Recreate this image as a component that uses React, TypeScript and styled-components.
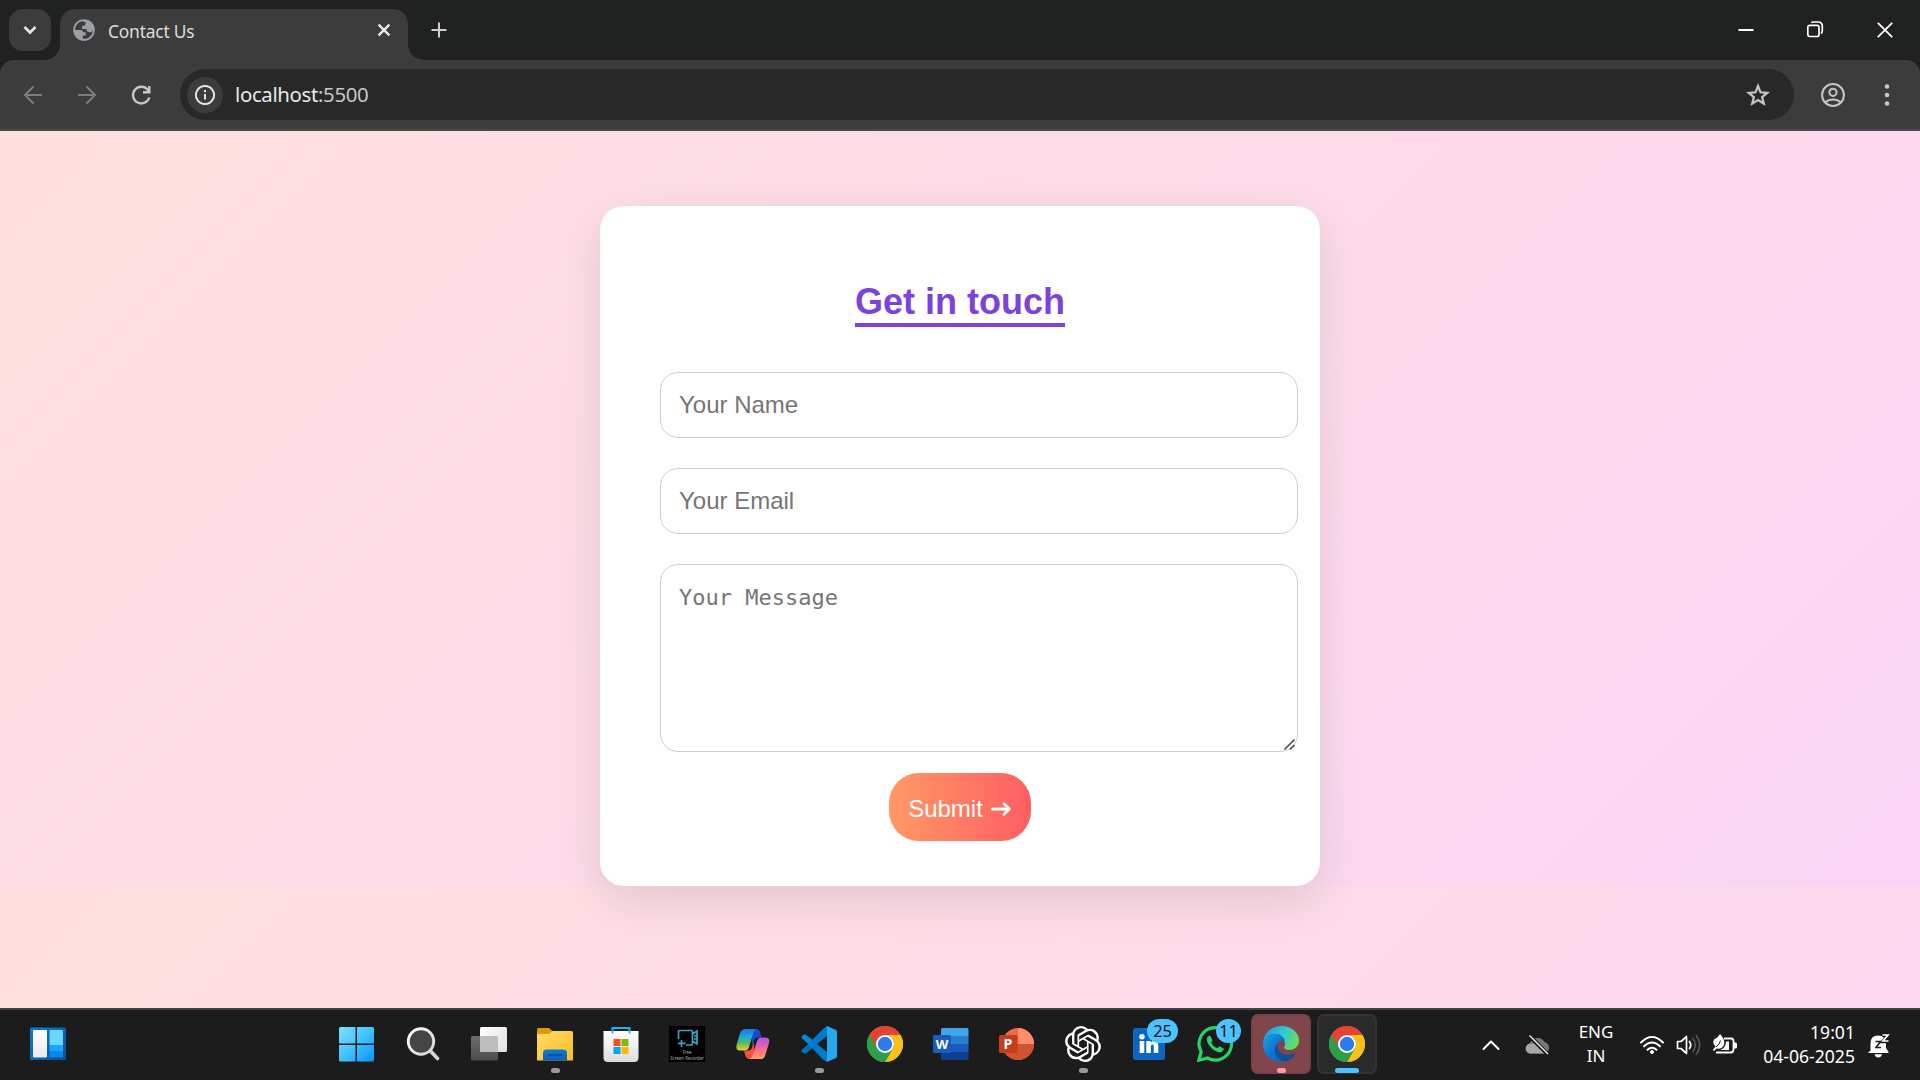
import React from 'react';
import styled, { createGlobalStyle } from 'styled-components';

const ui = `"Noto Sans", "Open Sans", sans-serif`;

const Global = createGlobalStyle`
  * { box-sizing: border-box; }
  body { margin: 0; overflow: hidden; background: #1c1c1c; }
  svg { display: block; flex: none; }
`;

const Screen = styled.div`
  width: 1920px;
  height: 1080px;
  display: flex;
  flex-direction: column;
  overflow: hidden;
`;

/* ---------- Browser ---------- */
const TabStrip = styled.header`
  height: 60px;
  background: #202221;
  display: flex;
  align-items: flex-start;
`;
const TabSearch = styled.button`
  width: 42px;
  height: 42px;
  margin: 9px 9px 0;
  padding: 0;
  border: 0;
  border-radius: 14px;
  background: #3c3c3c;
  display: grid;
  place-items: center;
`;
const Tab = styled.div`
  position: relative;
  width: 348px;
  height: 51px;
  margin-top: 9px;
  padding: 0 17px 0 13px;
  border-radius: 15px 15px 0 0;
  background: #3c3c3c;
  display: flex;
  align-items: flex-start;
  &::before, &::after {
    content: '';
    position: absolute;
    bottom: 0;
    width: 15px;
    height: 15px;
  }
  &::before { left: -15px; background: radial-gradient(circle at 0 0, transparent 14.5px, #3c3c3c 15px); }
  &::after { right: -15px; background: radial-gradient(circle at 100% 0, transparent 14.5px, #3c3c3c 15px); }
`;
const Favicon = styled.div`
  margin: 10px 13px 0 0;
`;
const TabTitle = styled.span`
  flex: 1;
  margin-top: 9px;
  font: 17.4px/26px ${ui};
  letter-spacing: -0.2px;
  color: #dedede;
`;
const TabClose = styled.div`
  margin-top: 14px;
`;
const NewTab = styled.div`
  margin: 22px 0 0 33px;
  transform: translateX(-10px);
`;
const WindowButtons = styled.div`
  margin-left: auto;
  height: 59px;
  padding-right: 27px;
  display: flex;
  align-items: center;
  gap: 53px;
`;
const ToolbarBack = styled.div`
  height: 71px;
  background: #202221;
`;
const Toolbar = styled.nav`
  height: 71px;
  background: #3c3c3c;
  border-radius: 14px 14px 0 0;
  border-bottom: 2px solid #4a4a4a;
  padding: 9px 28px 9px 21px;
  display: flex;
  align-items: center;
`;
const NavIcons = styled.div`
  display: flex;
  align-items: center;
  gap: 30px;
  width: 159px;
`;
const AddressBar = styled.div`
  width: 1614px;
  height: 51px;
  border-radius: 26px;
  background: #282828;
  padding: 0 24px 0 7px;
  display: flex;
  align-items: center;
`;
const SiteInfo = styled.div`
  width: 36px;
  height: 36px;
  border-radius: 50%;
  background: #3c3c3c;
  display: grid;
  place-items: center;
`;
const Url = styled.span`
  flex: 1;
  margin: 0 0 2px 12px;
  font: 20.4px/30px ${ui};
  letter-spacing: -0.35px;
  color: #e8e8e8;
  span { color: #c7c7c7; }
`;
const ToolIcons = styled.div`
  margin-left: auto;
  display: flex;
  align-items: center;
  gap: 37px;
`;

/* ---------- Contact page ---------- */
const Page = styled.main`
  height: 877px;
  padding-top: 75px;
  background-image: linear-gradient(135deg, #ffe0de, #fddce5 32%, #fcd9ec 70%, #f9d4f8);
  background-size: 100% 755px;
`;
const Card = styled.form`
  width: 720px;
  height: 680px;
  margin: 0 auto;
  padding: 77px 22px 0 60px;
  border-radius: 24px;
  background: #fff;
  box-shadow: 0 15px 45px rgba(0, 0, 0, 0.1);
  font-family: "Liberation Sans", Arial, sans-serif;
`;
const Heading = styled.h2`
  width: fit-content;
  margin: 0 0 45px 195px;
  padding: 0 0 2px;
  border-bottom: 4px solid #7b43dc;
  font-size: 36px;
  line-height: 38px;
  white-space: nowrap;
  color: #7b43dc;
`;
const Input = styled.input`
  display: block;
  width: 638px;
  height: 66px;
  margin: 0 0 30px;
  padding: 0 18px;
  border: 1px solid #ccc;
  border-radius: 18px;
  background: #fff;
  font: 24px "Liberation Sans", Arial, sans-serif;
  &::placeholder { color: #757575; }
`;
const MessageField = styled.div`
  position: relative;
  width: 638px;
  height: 188px;
`;
const Message = styled.textarea`
  display: block;
  width: 100%;
  height: 100%;
  padding: 19px 18px;
  border: 1px solid #ccc;
  border-radius: 18px;
  background: #fff;
  resize: none;
  font: 22px/28px "DejaVu Sans Mono", monospace;
  &::placeholder { color: #757575; }
`;
const Grip = styled.div`
  position: absolute;
  right: 2px;
  bottom: 1px;
`;
const Submit = styled.button`
  width: 142px;
  height: 68px;
  margin: 21px 0 0 229px;
  padding: 3px 0 0;
  border: 0;
  border-radius: 30px;
  background: linear-gradient(to right, #ff9966, #ff5e62);
  color: #fff;
  font: 24px "Liberation Sans", Arial, sans-serif;
  display: flex;
  align-items: center;
  justify-content: center;
  gap: 8px;
`;

/* ---------- Taskbar ---------- */
const Taskbar = styled.footer`
  height: 72px;
  border-top: 2px solid #424242;
  background: #1c1c1c;
  display: flex;
  align-items: flex-start;
`;
const Widgets = styled.div`
  width: 327px;
  padding: 16px 0 0 30px;
`;
const Apps = styled.div`
  display: flex;
  gap: 6px;
  padding-top: 4px;
`;
const AppTile = styled.div<{ $tone?: 'alert' | 'active' }>`
  position: relative;
  width: 60px;
  height: 60px;
  border-radius: 7px;
  border: 2px solid ${p => (p.$tone === 'active' ? '#343434' : p.$tone === 'alert' ? '#74434a' : 'transparent')};
  background: ${p => (p.$tone === 'active' ? '#2a2a2a' : p.$tone === 'alert' ? '#81454c' : 'transparent')};
  display: grid;
  place-items: center;
`;
const Indicator = styled.i<{ $w?: number; $c?: string }>`
  position: absolute;
  bottom: -1px;
  left: calc(50% - ${p => (p.$w ?? 9) / 2}px);
  width: ${p => p.$w ?? 9}px;
  height: 5px;
  border-radius: 3px;
  background: ${p => p.$c ?? '#9a9a9a'};
`;
const Badge = styled.span<{ $w: number; $x: number }>`
  position: absolute;
  top: 3px;
  left: ${p => p.$x}px;
  width: ${p => p.$w}px;
  height: 24px;
  border-radius: 12px;
  background: #4cc2ff;
  color: #111;
  font: 16.5px/24px ${ui};
  letter-spacing: -0.3px;
  text-align: center;
`;
const Tray = styled.div`
  margin-left: auto;
  height: 69px;
  display: flex;
  align-items: center;
  padding-right: 30px;
  color: #fff;
`;
const TrayItem = styled.div<{ $gap: number }>`
  margin-right: ${p => p.$gap}px;
`;
const TrayText = styled.div<{ $align: 'center' | 'flex-end'; $gap: number; $w: number; $size: number }>`
  width: ${p => p.$w}px;
  margin: 0 ${p => p.$gap}px 1px 0;
  font: ${p => p.$size}px/24px ${ui};
  white-space: nowrap;
  display: flex;
  flex-direction: column;
  align-items: ${p => p.$align};
`;
const RecorderCaption = styled.div`
  position: absolute;
  left: 0;
  right: 0;
  top: 33px;
  text-align: center;
  font: 4.4px/6px ${ui};
  color: #aaa;
`;

const Line = ({ d, w = 18, h = w, vb = `0 0 ${w} ${h}`, s = 2, c = '#c7c7c7', cap = 'butt' }: {
  d: string; w?: number; h?: number; vb?: string; s?: number; c?: string; cap?: 'butt' | 'round';
}) => (
  <svg width={w} height={h} viewBox={vb} fill="none" stroke={c} strokeWidth={s} strokeLinecap={cap} strokeLinejoin={cap === 'round' ? 'round' : 'miter'}>
    <path d={d} />
  </svg>
);

const Chrome = () => (
  <svg width="36" height="36" viewBox="0 0 36 36">
    <circle cx="18" cy="18" r="18" fill="#2f9e4a" />
    <path d="M2.4 9A18 18 0 0 1 33.6 9H18A9 9 0 0 0 10.2 22.5Z" fill="#e94235" />
    <path d="M33.6 9A18 18 0 0 1 18 36L25.8 22.5A9 9 0 0 0 18 9Z" fill="#fcc016" />
    <path d="M2.4 9A18 18 0 0 0 18 36L25.8 22.5A9 9 0 0 1 10.2 22.5Z" fill="#2f9e4a" />
    <circle cx="18" cy="18" r="9" fill="#fff" />
    <circle cx="18" cy="18" r="7.2" fill="#2f7bed" />
  </svg>
);

const Knot = () => (
  <svg width="36" height="36" viewBox="0 0 24 24" fill="#fff">
    <path d="M22.28 9.82a5.98 5.98 0 0 0-.52-4.91 6.05 6.05 0 0 0-6.51-2.9A6.07 6.07 0 0 0 4.98 4.18a5.98 5.98 0 0 0-4 2.9 6.05 6.05 0 0 0 .74 7.1 5.98 5.98 0 0 0 .51 4.91 6.05 6.05 0 0 0 6.52 2.9A5.98 5.98 0 0 0 13.26 24a6.06 6.06 0 0 0 5.77-4.21 5.99 5.99 0 0 0 4-2.9 6.06 6.06 0 0 0-.75-7.07zm-9.02 12.61a4.48 4.48 0 0 1-2.88-1.04l.14-.08 4.78-2.76a.8.8 0 0 0 .39-.68v-6.74l2.02 1.17a.07.07 0 0 1 .04.05v5.58a4.5 4.5 0 0 1-4.49 4.5zM3.6 18.3a4.47 4.47 0 0 1-.54-3.01l.14.09 4.78 2.76a.77.77 0 0 0 .78 0l5.85-3.37v2.33a.08.08 0 0 1-.03.06L9.74 19.95a4.5 4.5 0 0 1-6.14-1.65zM2.34 7.9a4.49 4.49 0 0 1 2.37-1.98V11.6a.77.77 0 0 0 .39.68l5.81 3.35-2.02 1.17a.08.08 0 0 1-.07 0L4 14.01A4.5 4.5 0 0 1 2.34 7.87zm16.6 3.86L13.1 8.36 15.12 7.2a.08.08 0 0 1 .07 0l4.83 2.79a4.49 4.49 0 0 1-.68 8.1v-5.68a.79.79 0 0 0-.4-.65zm2-3.03-.14-.08-4.77-2.78a.78.78 0 0 0-.79 0L9.41 9.23V6.9a.07.07 0 0 1 .03-.06l4.83-2.79a4.5 4.5 0 0 1 6.68 4.66zM8.31 12.86l-2.02-1.16a.08.08 0 0 1-.04-.06V6.07a4.5 4.5 0 0 1 7.38-3.45l-.14.08-4.78 2.76a.8.8 0 0 0-.4.68zm1.1-2.36 2.6-1.5 2.61 1.5v3l-2.6 1.5-2.61-1.5Z" />
  </svg>
);

const Grad = ({ id, stops, x2 = 1, y2 = 1 }: { id: string; stops: string[]; x2?: number; y2?: number }) => (
  <linearGradient id={id} x1="0" y1="0" x2={x2} y2={y2}>
    {stops.map((c, i) => <stop key={c + i} offset={i / (stops.length - 1)} stopColor={c} />)}
  </linearGradient>
);

const BrowserChrome = () => (
  <>
    <TabStrip>
      <TabSearch><Line w={14} h={10} s={2.7} c="#e3e3e3" d="M1.5 2 7 7.5 12.5 2" /></TabSearch>
      <Tab>
        <Favicon>
          <svg width="22" height="22" viewBox="0 0 22 22">
            <circle cx="11" cy="11" r="10.8" fill="#9aa0a6" />
            <path d="M9.1 2.3C5 3 2.2 6.5 2.2 10.9h5.6c1.500 0 2.300 1 2.300 2.400h2.600v3.200h-3v3.100c5.300.900 9.900-3.200 10.100-8.200-.800 1.300-1.700 1.800-3.400 1.800-2 0-3-1.300-3-3.100H9.100V6.700h2.700c0-1.300.500-2.100 1.400-2.700-1.200-.600-2.400-1.800-4.100-1.700Z" fill="#3c3c3c" />
          </svg>
        </Favicon>
        <TabTitle>Contact Us</TabTitle>
        <TabClose><Line w={14} s={2.5} c="#e8e8e8" d="M1.6 1.6 12.4 12.4M12.4 1.6 1.6 12.4" /></TabClose>
      </Tab>
      <NewTab><Line w={16} s={2} c="#d0d0d0" d="M8 .5V15.5M.5 8H15.5" /></NewTab>
      <WindowButtons>
        <Line w={16} s={2} c="#fff" d="M.5 8H15.5" />
        <Line w={17} s={1.7} c="#fff" d="M2.8 4.3H10a2 2 0 0 1 2 2V13.500a2 2 0 0 1-2 2H2.800a2 2 0 0 1-2-2V6.300a2 2 0 0 1 2-2ZM4.300 1.600Q5 1 6.500 1H11.500A3.800 3.800 0 0 1 15.300 4.800V9.500Q15.300 11.500 14 12.500" />
        <Line w={16} s={1.8} c="#fff" d="M.8.800 15.200 15.200M15.200.800.800 15.200" />
      </WindowButtons>
    </TabStrip>
    <ToolbarBack>
      <Toolbar>
        <NavIcons>
          <Line w={24} c="#7d7d7d" d="M21 12H4.500M12.500 3.500 4 12 12.500 20.500" />
          <Line w={24} c="#7d7d7d" d="M3 12H19.500M11.500 3.500 20 12 11.500 20.500" />
          <Line w={24} s={2.4} d="M20.300 14.500A8.300 8.300 0 1 1 18.500 6.500L20.500 9M20.300 3V9.300H14" />
        </NavIcons>
        <AddressBar>
          <SiteInfo><Line w={22} s={2} c="#e3e3e3" d="M11 2A9 9 0 1 1 10.990 2ZM11 10V15.500M11 6V8.200" /></SiteInfo>
          <Url>localhost<span>:5500</span></Url>
          <Line w={24} s={2.2} d="M12 3 14.500 9.300 21.300 9.800 16.100 14.100 17.800 20.700 12 17.100 6.200 20.700 7.900 14.100 2.700 9.800 9.500 9.300Z" />
        </AddressBar>
        <ToolIcons>
          <svg width="24" height="24" viewBox="0 0 24 24" fill="none" stroke="#c7c7c7" strokeWidth="2">
            <circle cx="12" cy="12" r="10.900" /><circle cx="12" cy="9.300" r="3.600" /><path d="M4.500 19.300C8.500 15.700 15.500 15.700 19.500 19.300" />
          </svg>
          <svg width="10" height="24" viewBox="0 0 10 24" fill="#c7c7c7">
            <circle cx="5" cy="3.500" r="2.300" /><circle cx="5" cy="12" r="2.300" /><circle cx="5" cy="20.500" r="2.300" />
          </svg>
        </ToolIcons>
      </Toolbar>
    </ToolbarBack>
  </>
);

const TaskbarApps = () => (
  <Apps>
    <AppTile>
      <svg width="36" height="36" viewBox="1 0 36 36">
        <defs><Grad id="win" stops={['#84dcff', '#3fc4ff', '#0a94ff']} /></defs>
        <path d="M2.500 1H17.500V17.500H1V2.500Q1 1 2.500 1ZM19 1H34.500Q36 1 36 2.500V17.500H19ZM1 19H17.500V35.500H2.500Q1 35.500 1 34ZM19 19H36V34Q36 35.500 34.500 35.500H19Z" fill="url(#win)" />
      </svg>
    </AppTile>
    <AppTile>
      <svg width="36" height="36" viewBox="0 0 36 36">
        <defs><Grad id="sr" stops={['#ffffff', '#cfd2da']} /></defs>
        <circle cx="16" cy="15.500" r="12.700" fill="#454545" stroke="url(#sr)" strokeWidth="2.900" />
        <path d="M25.500 25 32.500 32.500" stroke="#d3d6de" strokeWidth="3.600" strokeLinecap="round" />
      </svg>
    </AppTile>
    <AppTile>
      <svg width="38" height="36" viewBox="0 0 38 36">
        <defs><Grad id="tv" stops={['#ffffff', '#dedede']} /><Grad id="tg" x2={0} stops={['#6d6d6d', '#4d4d4d']} /></defs>
        <rect x="1" y="10" width="27" height="24.500" rx="1.500" fill="url(#tg)" />
        <rect x="10" y="1" width="27" height="25" rx="1.500" fill="url(#tv)" />
        <path d="M10 10H28V26H11.500Q10 26 10 24.500Z" fill="#bdbdbd" />
      </svg>
    </AppTile>
    <AppTile>
      <svg width="36" height="36" viewBox="0 0 36 36">
        <defs><Grad id="fo" stops={['#ffdc6c', '#fcbd1d']} /><Grad id="fb" x2={0} stops={['#0d7bd3', '#0b60b5']} /></defs>
        <path d="M0 3.500Q0 2 1.500 2H12L16 5.500V10H0Z" fill="#dd9c07" />
        <path d="M0 8H12L15.500 5H34.500Q36 5 36 6.500V34.500H0Z" fill="url(#fo)" />
        <path d="M6 34.500V27Q6 23.500 9.500 23.500H26.500Q30 23.500 30 27V34.500Z" fill="url(#fb)" />
        <path d="M11 29H25" stroke="#084d96" strokeWidth="1.500" />
      </svg>
      <Indicator />
    </AppTile>
    <AppTile>
      <svg width="36" height="36" viewBox="0 0 36 36">
        <defs><Grad id="st" x2={0} stops={['#ffffff', '#dddddd']} /></defs>
        <path d="M.500 5H35.500V31.500Q35.500 36 31 36H5Q.500 36 .500 31.500Z" fill="url(#st)" />
        <path d="M9.500 7.500V2H26.500V7.500" fill="none" stroke="#1fb4ee" strokeWidth="2" />
        <path d="M10.500 13H17.500V20H10.500Z" fill="#f04f23" /><path d="M18.500 13H25.500V20H18.500Z" fill="#80ba01" />
        <path d="M10.500 21H17.500V28H10.500Z" fill="#02a4ef" /><path d="M18.500 21H25.500V28H18.500Z" fill="#ffb902" />
      </svg>
    </AppTile>
    <AppTile>
      <svg width="36" height="36" viewBox="0 0 36 36">
        <path d="M0 0H36V36H0Z" fill="#000" />
        <path d="M9.500 13V5.500Q9.500 4.500 10.500 4.500H22.500Q23.500 4.500 23.500 5.500V18Q23.500 19 22.500 19H17M23.500 8 28 5V18L23.500 15M25 10H28M25 13H28M12.500 14V21M9 17.300H16.500" fill="none" stroke="#35a5c4" strokeWidth="1.700" />
      </svg>
      <RecorderCaption>Free<br />Screen Recorder</RecorderCaption>
    </AppTile>
    <AppTile>
      <svg width="36" height="36" viewBox="0 0 36 36">
        <defs>
          <Grad id="cl" x2={0} stops={['#1e75dc', '#16a6e8', '#58bd5c', '#f3cf20']} />
          <Grad id="cr" x2={0} stops={['#a855ee', '#dc5cbb', '#ff7580', '#ffa45c']} />
        </defs>
        <path d="M17 3H21.500Q24 3 25 6L26.500 11.500H22.500Q20 11.500 18.500 16L17 20Z" fill="#1b49c9" />
        <path d="M19 33H14.500Q11.500 33 10.500 30L9 24.500H13.500Q16.500 24.500 17.500 20L19 16Z" fill="#f4513c" />
        <path d="M10 3H22Q19.500 3 18 8L14 21Q13 24.500 9.500 24.500H5Q.500 24.500 1.500 19L5 7.500Q6.500 3 10 3Z" fill="url(#cl)" />
        <path d="M26 33H14Q16.500 33 18 28L22 15Q23 11.500 26.500 11.500H30Q35.500 11.500 34 17L30.500 28.500Q29.500 33 26 33Z" fill="url(#cr)" />
      </svg>
    </AppTile>
    <AppTile>
      <svg width="36" height="36" viewBox="0 0 36 36">
        <path d="M26 1 1.200 23.500Q-.200 25 1.200 26.200L3.200 27.500Q4.200 28 5 27.300L26 11Z" fill="#0070b8" />
        <path d="M26 35 1.200 12.500Q-.200 11 1.200 9.800L3.200 8.500Q4.200 8 5 8.700L26 25Z" fill="#0089d6" />
        <path d="M26 0 35 4Q36 4.500 36 6V30Q36 31.500 35 32L26 36Z" fill="#27a9f2" />
        <path d="M26 0V11L17 18 26 25V36L22 33.500 10 21 8 18 10 15 22 3Z" fill="#007acc" />
        <path d="M26 10V26L16 18Z" fill="#1c1c1c" />
      </svg>
      <Indicator />
    </AppTile>
    <AppTile><Chrome /></AppTile>
    <AppTile>
      <svg width="36" height="36" viewBox="0 0 36 36">
        <path d="M8 3.500Q8 2 9.500 2H34Q35.500 2 35.500 3.500V10H8Z" fill="#41a5ee" />
        <path d="M8 10H35.500V18H8Z" fill="#2b7cd3" /><path d="M8 18H35.500V26H8Z" fill="#185abd" />
        <path d="M8 26H35.500V32.500Q35.500 34 34 34H9.500Q8 34 8 32.500Z" fill="#103f91" />
        <rect y="9" width="18" height="18" rx="1.500" fill="#1a5cbe" />
        <text x="9" y="22.500" textAnchor="middle" fill="#fff" fontFamily="Open Sans" fontWeight="700" fontSize="13">W</text>
      </svg>
    </AppTile>
    <AppTile>
      <svg width="36" height="36" viewBox="0 0 36 36">
        <circle cx="19" cy="18" r="16" fill="#ed6c47" />
        <path d="M19 2A16 16 0 0 1 35 18H19Z" fill="#ff8f6b" /><path d="M3 18H35A16 16 0 0 1 3 18Z" fill="#d35230" />
        <rect y="9" width="18.500" height="18" rx="1.500" fill="#c43e1c" />
        <text x="9" y="23" textAnchor="middle" fill="#fff" fontFamily="Open Sans" fontWeight="700" fontSize="14">P</text>
      </svg>
    </AppTile>
    <AppTile><Knot /><Indicator /></AppTile>
    <AppTile>
      <svg width="36" height="36" viewBox="0 0 36 36">
        <rect x="2" y="2" width="32" height="32" rx="2.500" fill="#0a66c2" />
        <circle cx="11" cy="10.800" r="2.700" fill="#fff" />
        <path d="M8.700 15H13.300V27H8.700ZM15.300 15H19.700V16.700C20.700 15.300 22 14.700 23.600 14.700 26.500 14.700 27.300 17 27.300 20V27H22.800V20.800C22.800 19.500 22.500 18.500 21.400 18.500 20.200 18.500 19.800 19.500 19.800 20.800V27H15.300Z" fill="#fff" />
      </svg>
      <Badge $w={31} $x={26}>25</Badge>
    </AppTile>
    <AppTile>
      <svg width="36" height="36" viewBox="0 0 36 36">
        <path d="M18.500 1.600A16.200 16.200 0 1 1 10.500 32L1.800 34.200 4.200 25.800A16.200 16.200 0 0 1 18.500 1.600Z" fill="none" stroke="#25d366" strokeWidth="3.200" />
        <path d="M12.800 9.500C10 10.500 9.300 12.500 10 15 11.500 20 17 25.500 22 26.200 24.500 26.500 26.500 25 26.800 22.500L22.300 20.200C21.500 21 21.300 22.200 20.200 22.100 17.700 21.500 15 18.800 14.300 16.800 14.200 15.800 15.500 15.300 15.500 14.300Z" fill="#25d366" />
      </svg>
      <Badge $w={25} $x={29}>11</Badge>
    </AppTile>
    <AppTile $tone="alert">
      <svg width="36" height="36" viewBox="0 0 36 36">
        <defs>
          <linearGradient id="et" x1="0" y1="0.300" x2="1" y2="0.600"><stop stopColor="#259bdd" /><stop offset=".55" stopColor="#35c8cf" /><stop offset="1" stopColor="#6be14b" /></linearGradient>
          <Grad id="eb" stops={['#22a5e4', '#0877d2', '#0868be']} />
        </defs>
        <path d="M0 17C1 6 8.500 0 18.500 0 28.500 0 36 6.500 36 14.500 36 20.500 31.500 24 26.500 24 23 24 20.800 22.700 21 21.500 23.500 18 22 12 13 11Z" fill="url(#et)" />
        <path d="M0 17C1 10 6 7.800 11 7.800 17 7.800 22 11 22 16 19 12.500 13.500 15 13.500 22 13.500 29 18 34 23 35.200 10 38-1 29 0 17Z" fill="url(#eb)" />
        <path d="M14.500 17.500C13.500 26 21 32.500 33 26.500 31 31.500 27 34.800 22.500 35.500 13 34.500 8.500 25 14.500 17.500Z" fill="#124f9b" />
      </svg>
      <Indicator $c="#ff99a4" />
    </AppTile>
    <AppTile $tone="active"><Chrome /><Indicator $w={24} $c="#4cc2ff" /></AppTile>
  </Apps>
);

const SystemTray = () => (
  <Tray>
    <TrayItem $gap={25}><Line w={18} h={12} c="#fff" s={2.1} cap="round" d="M1.500 10 9 2.500 16.500 10" /></TrayItem>
    <TrayItem $gap={26}>
      <svg width="26" height="22" viewBox="0 0 26 22">
        <path d="M6 19.500A5 5 0 0 1 5 9.500 8 8 0 0 1 19.500 8 6 6 0 0 1 20 19.500Z" fill="#777" />
        <path d="M7 19.500A5 5 0 0 1 5 9.500L10 10 22 18.500 20 19.500Z" fill="#a7a7a7" />
        <path d="M4 1.500 22.500 20" stroke="#1c1c1c" strokeWidth="4" /><path d="M4.500 1.500 23 20" stroke="#eee" strokeWidth="1.500" />
      </svg>
    </TrayItem>
    <TrayText $align="center" $w={38} $gap={24} $size={17}><span>ENG</span><span>IN</span></TrayText>
    <TrayItem $gap={11}>
      <svg width="26" height="20" viewBox="0 0 26 20" fill="none" stroke="#fff" strokeWidth="1.900" strokeLinecap="round">
        <path d="M2 7.500Q13-3.500 24 7.500M5 11.300Q13 3.700 21 11.300M8.500 14.800Q13 10.500 17.500 14.800" />
        <circle cx="13" cy="17" r="1.500" fill="#fff" strokeWidth="1" />
      </svg>
    </TrayItem>
    <TrayItem $gap={10}>
      <svg width="26" height="22" viewBox="0 0 26 22" fill="none" stroke="#fff" strokeWidth="1.700" strokeLinejoin="round" strokeLinecap="round">
        <path d="M1.500 7.500H5L10.500 2.500V19.500L5 14.500H1.500ZM13.500 7.500Q16 11 13.500 14.500" />
        <path d="M17 4.500Q21.500 11 17 17.500M20.500 2Q27 11 20.500 20" stroke="#555" />
      </svg>
    </TrayItem>
    <TrayItem $gap={21}>
      <svg width="26" height="22" viewBox="0 0 26 22">
        <path d="M12 4.500H19Q21.500 4.500 21.500 7V15.500Q21.500 18.500 18.500 18.500H4" fill="none" stroke="#fff" strokeWidth="1.800" />
        <path d="M22 8.500H23.500Q25 8.500 25 10V13Q25 14.500 23.500 14.500H22ZM14 7.500H17V16H8.500Q14 13.500 14 7.500Z" fill="#fff" />
        <path d="M8 0Q13.500 6 12 11 10 15.500 4.500 14.500L2 17 .800 16 3.500 12.500Q-.500 9 2.500 5 5 4.500 8 0Z" fill="#fff" />
        <path d="M8.500 6.500Q8 10 4 13" fill="none" stroke="#1c1c1c" />
      </svg>
    </TrayItem>
    <TrayText $align="flex-end" $w={96} $gap={13} $size={17.6}><span>19:01</span><span>04-06-2025</span></TrayText>
    <svg width="22" height="26" viewBox="0 0 22 26">
      <path d="M2.500 19V11.500Q2.500 3.500 10 3.500 18 3.500 18 11.500V16L20.500 20V21H.500V20ZM6.500 22.200H14Q13 25.500 10.300 25.500 7.500 25.500 6.500 22.200Z" fill="#fff" />
      <path d="M7.500 9.500H12.500L8 15.500H13" fill="none" stroke="#1c1c1c" strokeWidth="1.600" />
      <path d="M14.500 3.500H20.500L15 9.500H21" fill="none" stroke="#1c1c1c" strokeWidth="3.600" /><path d="M14.500 3H20L15 9H20.500" fill="none" stroke="#fff" strokeWidth="1.700" />
    </svg>
  </Tray>
);

export default function App() {
  return (
    <Screen>
      <Global />
      <BrowserChrome />
      <Page>
        <Card>
          <Heading>Get in touch</Heading>
          <Input placeholder="Your Name" />
          <Input placeholder="Your Email" />
          <MessageField>
            <Message placeholder="Your Message" />
            <Grip><Line w={13} s={1.5} c="#444" d="M1.500 11.500 11.500 1.500M7 11.500 11.500 7" /></Grip>
          </MessageField>
          <Submit type="button">
            Submit
            <svg width="21" height="20" viewBox="0 0 21 20" fill="none" stroke="#fff" strokeLinejoin="round" strokeLinecap="round">
              <path d="M1.500 10H17" strokeWidth="3" /><path d="M13 4.800 18.300 10 13 15.200" strokeWidth="2.900" />
            </svg>
          </Submit>
        </Card>
      </Page>
      <Taskbar>
        <Widgets>
          <svg width="36" height="36" viewBox="0 0 36 36">
            <defs><Grad id="wb" stops={['#0c7cd5', '#114b90']} /><Grad id="ww" x2={0} stops={['#ffffff', '#e9e9e9']} /></defs>
            <rect y="1.500" width="36" height="32.500" rx="1.500" fill="url(#wb)" />
            <rect x="3" y="4" width="14" height="27.500" rx="1" fill="url(#ww)" />
            <path d="M19.500 5Q19.500 4 20.500 4H32Q33 4 33 5V19H19.500Z" fill="#68d8ff" />
            <path d="M19.500 19H33V25H19.500Z" fill="#1ba4fb" /><path d="M19.500 25H33V31.500H19.500Z" fill="#0786ec" />
          </svg>
        </Widgets>
        <TaskbarApps />
        <SystemTray />
      </Taskbar>
    </Screen>
  );
}
